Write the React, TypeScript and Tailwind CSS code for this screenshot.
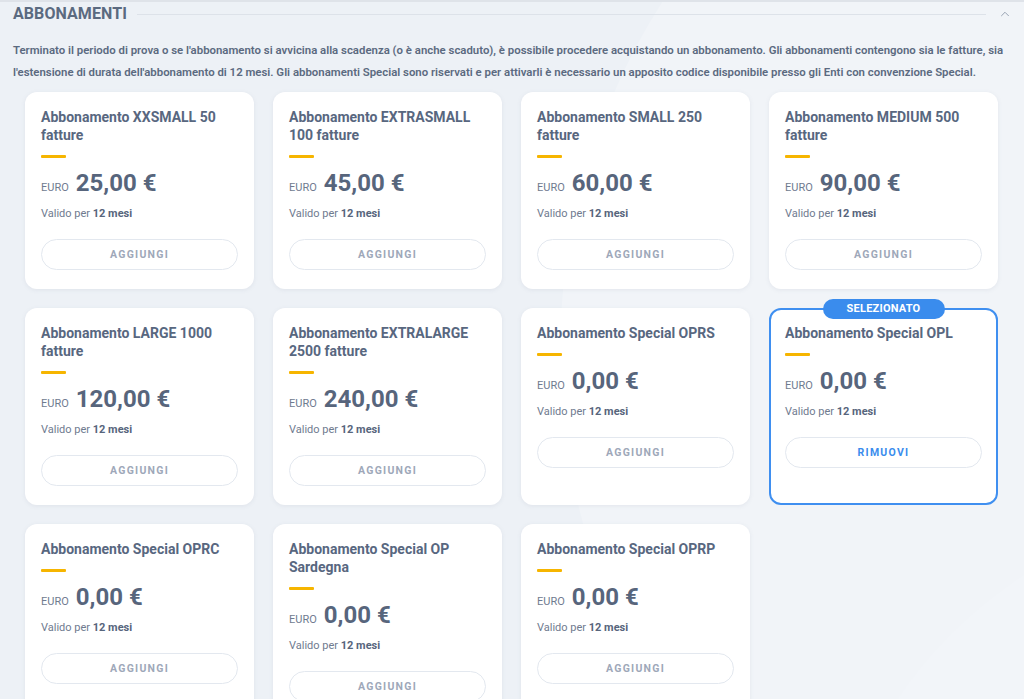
import { ChevronUp } from "lucide-react";

interface Plan {
    name: string;
    price: string;
    selected?: boolean;
}

const plans: Plan[] = [
    { name: "Abbonamento XXSMALL 50 fatture", price: "25,00 €" },
    { name: "Abbonamento EXTRASMALL 100 fatture", price: "45,00 €" },
    { name: "Abbonamento SMALL 250 fatture", price: "60,00 €" },
    { name: "Abbonamento MEDIUM 500 fatture", price: "90,00 €" },
    { name: "Abbonamento LARGE 1000 fatture", price: "120,00 €" },
    { name: "Abbonamento EXTRALARGE 2500 fatture", price: "240,00 €" },
    { name: "Abbonamento Special OPRS", price: "0,00 €" },
    { name: "Abbonamento Special OPL", price: "0,00 €", selected: true },
    { name: "Abbonamento Special OPRC", price: "0,00 €" },
    { name: "Abbonamento Special OP Sardegna", price: "0,00 €" },
    { name: "Abbonamento Special OPRP", price: "0,00 €" },
];

const PlanCard = ({ plan }: { plan: Plan }) => {
    return (
        <div
            className={
                plan.selected
                    ? "relative flex flex-col rounded-[12px] border-2 border-[#3f8ff0] bg-white px-[14px] pt-[14px] pb-[17px]"
                    : "relative flex flex-col rounded-[12px] bg-white px-4 pt-4 pb-[19px] shadow-[0_1px_4px_rgba(120,135,160,0.12)]"
            }
        >
            {plan.selected && (
                <div className="absolute -top-[11px] left-1/2 -translate-x-1/2 h-[20px] w-[122px] rounded-full bg-[#3a8ced] text-white text-[11px] font-bold leading-[20px] text-center tracking-[0.02em]">
                    SELEZIONATO
                </div>
            )}
            <h3 className="text-[14px] leading-[18px] font-bold text-[#58677f]">{plan.name}</h3>
            <div className="mt-[11px] h-[3px] w-[25px] bg-[#f6b500] rounded-[1px]" />
            <div className="mt-[10px] flex items-baseline gap-[7px] leading-[30px]">
                <span className="text-[11px] text-[#6f7b8f]">EURO</span>
                <span className="text-[24px] font-bold text-[#57657c]">{plan.price}</span>
            </div>
            <p className="mt-[3px] text-[11px] leading-[16px] text-[#6f7b8f]">
                Valido per <span className="font-bold text-[#57657c]">12 mesi</span>
            </p>
            <button
                className={
                    plan.selected
                        ? "mt-[17px] h-[31px] w-full rounded-full border border-[#e3e8ef] bg-white text-[10.5px] font-bold tracking-[0.12em] text-[#3a8ced]"
                        : "mt-[17px] h-[31px] w-full rounded-full border border-[#e3e8ef] bg-white text-[10.5px] font-bold tracking-[0.12em] text-[#9ea8b9]"
                }
            >
                {plan.selected ? "RIMUOVI" : "AGGIUNGI"}
            </button>
        </div>
    );
};

export default function App() {
    return (
        <div className="relative min-h-screen overflow-hidden bg-[#edf1f6] border-t-2 border-[#dfe3e9] font-['Roboto',sans-serif]">
            {/* soft background shapes */}
            <div className="pointer-events-none absolute -top-[300px] left-[560px] h-[1300px] w-[1300px] rounded-full bg-[#f1f4f8]" />
            <div className="pointer-events-none absolute top-[500px] left-[820px] h-[900px] w-[900px] rounded-full bg-[#f2f5f9]" />

            <div className="relative">
                <div className="flex items-center pl-[13px] pr-[12px] pt-[2px] h-[22px]">
                    <h2 className="text-[16px] font-bold text-[#5b6a80] tracking-[0.005em]">ABBONAMENTI</h2>
                    <div className="ml-[10px] mr-[12px] h-px flex-1 bg-[#dde2e9]" />
                    <ChevronUp className="h-[14px] w-[14px] text-[#8c97a8]" strokeWidth={1.5} />
                </div>

                <p className="mt-[15px] px-[13px] text-[11.4px] leading-[22px] font-semibold text-[#5b6a80]">
                    Terminato il periodo di prova o se l'abbonamento si avvicina alla scadenza (o è anche scaduto), è possibile procedere acquistando un abbonamento. Gli abbonamenti contengono sia le fatture, sia l'estensione di durata dell'abbonamento di 12 mesi. Gli abbonamenti Special sono riservati e per attivarli è necessario un apposito codice disponibile presso gli Enti con convenzione Special.
                </p>

                <div className="mt-[9px] grid grid-cols-4 gap-x-[19px] gap-y-[19px] pl-[25px] pr-[26px] pb-8">
                    {plans.map((plan) => (
                        <PlanCard key={plan.name} plan={plan} />
                    ))}
                </div>
            </div>
        </div>
    );
}
